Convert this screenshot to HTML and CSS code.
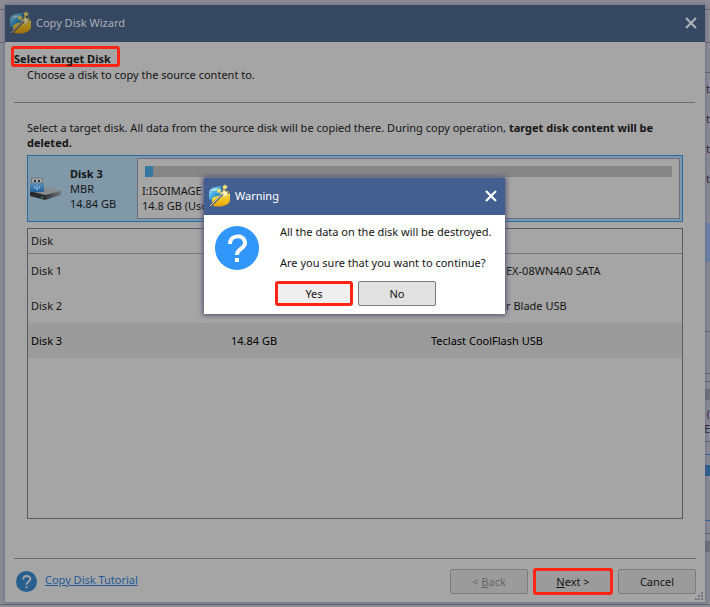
FILE: index.html
```
<!DOCTYPE html>
<html lang="en">
<head>
<meta charset="utf-8">
<title>Copy Disk Wizard</title>
<link rel="stylesheet" href="styles.css">
</head>
<body>
<svg width="0" height="0" class="defs" aria-hidden="true">
  <defs>
    <linearGradient id="blue" x1="0" y1="0" x2="1" y2="1"><stop offset="0" stop-color="#b5e8ff"/><stop offset=".5" stop-color="#38a3df"/><stop offset="1" stop-color="#1267ad"/></linearGradient>
    <linearGradient id="gold" x1="0" y1="0" x2="0" y2="1"><stop offset="0" stop-color="#ffe33c"/><stop offset="1" stop-color="#e5a406"/></linearGradient>
    <linearGradient id="usb" x1="0" y1="0" x2="0" y2="1"><stop offset="0" stop-color="#5d8fb8"/><stop offset="1" stop-color="#22609c"/></linearGradient>
    <linearGradient id="metal" x1="0" y1="0" x2="1" y2="0"><stop offset="0" stop-color="#303336"/><stop offset="1" stop-color="#72767a"/></linearGradient>
    <symbol id="wizard" viewBox="0 0 24 24">
      <path d="M1 8Q2 4 7 3l6-1 1 9-9 6-3-1q-1-1-1-3z" fill="url(#blue)"/>
      <path d="M3 7Q6 4 10 4.500q-3 3-7 2.500z" fill="#d5f2ff"/>
      <path d="M4 15q1-3 8-3.500 6 0 10-2.500v7q0 4-7 6-8 1.500-11-1z" fill="url(#gold)"/>
      <path d="M5 15q8 0 16-4" stroke="#fff07a" stroke-width=".8" fill="none"/>
      <path d="M16 5l1.500 2.500 3 0-1.500 2.500 1.500 3-3-1-2.500 2-.5-3-3-1.500 3-1.500z" fill="#fff8b8" stroke="#d6a31c" stroke-width=".6"/>
      <path d="M17 0l.8 1.800 2.200.2-1.500 1.500.3 2-1.800-1-2 1 .4-2L14 2l2.200-.2z" fill="#ffe978"/>
      <path d="M11 4l.8 1.600 2 .2-1.400 1.400.2 2-1.600-1-2 1 .4-2L8 5.800l2-.2z" fill="#f8e674"/>
      <path d="M2 22.500L15 10" stroke="#4d5861" stroke-width="2"/><path d="M2 22L15 9.500" stroke="#dde1e4" stroke-width="1"/>
    </symbol>
    <symbol id="close" viewBox="0 0 12 12"><path d="M1 1l10 10M11 1L1 11" stroke="currentColor" stroke-width="2.200" fill="none"/></symbol>
    <symbol id="question" viewBox="0 0 44 44">
      <circle cx="22" cy="22" r="22" fill="currentColor"/>
      <path d="M15 18C15 8 30 8 30 17c0 6-8 5.500-8 12" fill="none" stroke="var(--mark)" stroke-width="4"/>
      <path d="M20 32h4v4h-4z" fill="var(--mark)"/>
    </symbol>
  </defs>
</svg>

<aside class="backdrop" aria-hidden="true">
  <i class="rule full r1"></i><i class="rule full r2"></i><i class="rule r3"></i>
  <span class="peek p1">t</span><span class="peek p2">t</span><span class="peek p3">t</span><span class="peek p4">t</span>
  <i class="block b1"></i><i class="rule r4"></i><i class="rule r5"></i><i class="rule r6"></i>
  <i class="block b2"></i><span class="peek p5">(</span><span class="peek p6">E</span>
  <i class="rule r7"></i><i class="rule blue r8"></i><i class="block b3"></i><i class="rule blue r9"></i><i class="rule r10"></i><i class="block b4"></i><i class="rule full r11"></i>
</aside>

<main class="window">
  <header class="titlebar">
    <svg class="app-icon"><use href="#wizard"/></svg>
    <span class="title">Copy Disk Wizard</span>
    <button class="close" aria-label="Close wizard"><svg><use href="#close"/></svg></button>
  </header>

  <div class="intro">
    <h1 class="marked">Select target Disk</h1>
    <p>Choose a disk to copy the source content to.</p>
  </div>

  <section class="content">
    <p class="hint">Select a target disk. All data from the source disk will be copied there. During copy operation, <b>target disk content will be deleted.</b></p>
    <div class="disk-card">
      <div class="disk-info">
        <svg class="drive" viewBox="0 0 32 24">
          <path d="M0 14l13-4 18 4-15 5z" fill="#898c8e"/><path d="M0 14l15 4v5L0 19z" fill="#292c2e"/><path d="M15 18l16-4v4l-16 5z" fill="url(#metal)"/>
          <path d="M1.500 1h11v5h-11z" fill="#a2a5a5" stroke="#717679"/><path d="M4 3h2v2H4zM8 3h2v2H8z" fill="#35383b"/>
          <path d="M0 6h14v9H0z" fill="url(#usb)"/><path d="M7 7.500v6M4.500 9v2L7 12l2.500-1V9" fill="none" stroke="#8cc1e8" stroke-width=".8"/>
          <path d="M11 20h2v1h-2z" fill="#35b54a"/>
        </svg>
        <div><b>Disk 3</b><br>MBR<br>14.84 GB</div>
      </div>
      <div class="partition">
        <div class="usage"><div class="used"></div></div>
        <div class="volume">I:ISOIMAGE<br>14.8 GB (Use</div>
      </div>
    </div>
    <div class="list">
      <table>
        <thead><tr><th>Disk</th><th></th><th></th></tr></thead>
        <tbody>
          <tr><td>Disk 1</td><td></td><td class="model">EX-08WN4A0 SATA</td></tr>
          <tr><td>Disk 2</td><td></td><td class="model">r Blade USB</td></tr>
          <tr class="selected"><td>Disk 3</td><td>14.84 GB</td><td>Teclast CoolFlash USB</td></tr>
        </tbody>
      </table>
    </div>
  </section>

  <footer class="footer">
    <svg class="help"><use href="#question"/></svg>
    <a href="#tutorial">Copy Disk Tutorial</a>
    <div class="actions">
      <button class="button" disabled>&lt; <u>B</u>ack</button>
      <button class="button highlight"><u>N</u>ext &gt;</button>
      <button class="button">Cancel</button>
    </div>
  </footer>
  <svg class="grip" viewBox="0 0 8 8"><path d="M6 0h2v2H6zM3 3h2v2H3zM6 3h2v2H6zM0 6h2v2H0zM3 6h2v2H3zM6 6h2v2H6z" fill="#77777b"/></svg>
</main>

<div class="dialog" role="alertdialog" aria-labelledby="dialog-title">
  <header class="titlebar">
    <svg class="app-icon"><use href="#wizard"/></svg>
    <span class="title" id="dialog-title">Warning</span>
    <button class="close" aria-label="Close warning"><svg><use href="#close"/></svg></button>
  </header>
  <div class="dialog-body">
    <svg class="question"><use href="#question"/></svg>
    <div class="message"><p>All the data on the disk will be destroyed.</p><p>Are you sure that you want to continue?</p></div>
  </div>
  <div class="dialog-actions">
    <button class="button highlight">Yes</button>
    <button class="button">No</button>
  </div>
</div>
</body>
</html>
```
FILE: styles.css
```
* { box-sizing: border-box; }
body {
  margin: 0;
  min-height: 100vh;
  display: flex;
  padding: 5px;
  background: #8f8f96;
  font: 11px/15px "Noto Sans", "Open Sans", sans-serif;
  color: #151515;
}
h1, p { margin: 0; font-size: 11px; }
button { font: inherit; color: inherit; }
.defs { position: absolute; }

.backdrop { position: absolute; inset: 0; overflow: hidden; }
.backdrop > * { position: absolute; right: 0; }
.rule { width: 5px; height: 1px; background: #67666f; }
.rule.full { width: 100%; }
.rule.blue { background: #27659e; }
.block { width: 5px; height: 11px; background: #717178; }
.peek { color: #24202c; }
.r1 { top: 9px; } .r2 { top: 42px; } .r3 { top: 72px; }
.p1 { top: 81px; } .p2 { top: 111px; } .p3 { top: 141px; } .p4 { top: 171px; }
.block.b1 { top: 223px; height: 39px; background: #6f86a7; }
.r4 { top: 331px; } .r5 { top: 373px; } .r6 { top: 381px; }
.b2 { top: 389px; } .p5 { top: 406px; } .p6 { top: 421px; }
.r7 { top: 441px; } .r8 { top: 454px; } .block.b3 { top: 465px; background: #27608d; }
.r9 { top: 520px; } .r10 { top: 533px; } .b4 { top: 541px; } .r11 { top: 604px; }

.window {
  position: relative;
  flex: 1;
  display: flex;
  flex-direction: column;
  background: #a5a5a5;
  box-shadow: 0 0 5px 1px #5c588099;
}
.titlebar {
  display: flex;
  align-items: center;
  height: 37px;
  padding: 0 8px 2px 4px;
  gap: 3px;
  background: #364761;
  color: #acb0b7;
}
.window > .titlebar .app-icon { filter: brightness(0.68); }
.app-icon { width: 24px; height: 24px; }
.title { flex: 1; }
.close { display: flex; border: 0; padding: 0; background: none; }
.close svg { width: 12px; height: 12px; }

.intro { margin: 4px 10px 0 9px; padding: 0 0 20px; border-bottom: 1px solid #6b6b6d; }
.marked {
  width: max-content;
  height: 21px;
  margin-left: -3px;
  padding: 2px 6px 0 0;
  border: 3px solid #ff2413;
  border-radius: 3px;
  line-height: 15px;
}
.intro p { padding-left: 13px; }

.content { flex: 1; display: flex; flex-direction: column; margin: 17px 22px 39px; }
.disk-card {
  display: flex;
  height: 67px;
  margin: 5px 0 6px;
  padding: 2px;
  border: 1px solid #286ba3;
  background: #8198a9;
}
.disk-info { display: flex; align-items: center; gap: 8px; width: 107px; }
.drive { width: 32px; height: 26px; }
.partition { flex: 1; padding: 7px 7px 0; border: 1px solid #687080; background: #a5a5a5; }
.volume { margin: 6px 0 0 -3px; }
.usage { height: 11px; background: #868686; }
.used { width: 8px; height: 11px; background: #34779f; }

.list { flex: 1; border: 1px solid #5b5b5f; }
table { width: 100%; border-collapse: collapse; table-layout: fixed; }
th, td { height: 35px; padding: 0 3px; text-align: left; font-weight: normal; white-space: nowrap; }
th { height: 24px; border-bottom: 1px solid #77777a; }
th:nth-child(-n+2) { width: 200px; }
.selected { background: #9b9b9b; color: #000; }
.model { padding-left: 78px; }

.footer {
  display: flex;
  align-items: flex-start;
  margin: 0 9px;
  padding: 10px 0 8px 2px;
  border-top: 1px solid #6b6b6d;
  gap: 8px;
}
.help { width: 21px; height: 21px; margin-top: 2px; color: #285f8e; --mark: #a5a5a5; }
.footer a { margin-top: 3px; color: #245a95; }
.actions { display: flex; gap: 5px; margin-left: auto; }
.button {
  width: 78px;
  height: 25px;
  padding: 0;
  border: 1px solid #7c7c7c;
  border-radius: 2px;
  background: #9b9b9b;
}
.button:disabled { color: #66666a; }
.button.highlight { border: 3px solid #ff2413; border-radius: 3px; }
.actions .highlight { width: 80px; height: 27px; margin: -1px 0; }
.grip { position: absolute; right: 2px; bottom: 2px; width: 8px; height: 8px; }

.dialog {
  position: absolute;
  top: 178px;
  left: 50%;
  width: 301px;
  margin-left: -151px;
  background: #fff;
  box-shadow: 0 0 5px 1px #4f4b70;
}
.dialog .titlebar { background: #435f91; color: #fff; }
.dialog-body { display: flex; gap: 21px; padding: 9px 0 0 11px; }
.question { flex: none; width: 44px; height: 44px; margin-top: 2px; color: #3096fa; --mark: #fff; }
.message { display: grid; gap: 15px; white-space: nowrap; }
.dialog-actions { display: flex; gap: 5px; padding: 11px 0 8px 71px; }
.dialog .button { background: #e1e1e1; }
.dialog .highlight { background: #efefef; }
```
